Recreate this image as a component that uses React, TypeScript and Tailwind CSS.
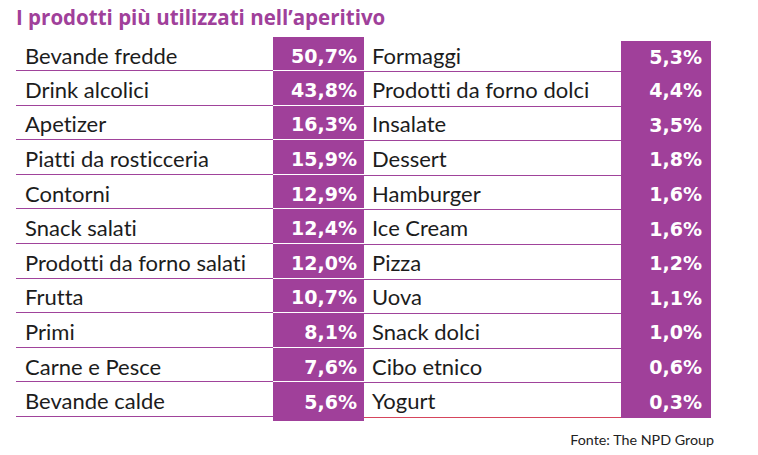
import React from "react";

const left: [string, string][] = [
  ["Bevande fredde", "50,7%"],
  ["Drink alcolici", "43,8%"],
  ["Apetizer", "16,3%"],
  ["Piatti da rosticceria", "15,9%"],
  ["Contorni", "12,9%"],
  ["Snack salati", "12,4%"],
  ["Prodotti da forno salati", "12,0%"],
  ["Frutta", "10,7%"],
  ["Primi", "8,1%"],
  ["Carne e Pesce", "7,6%"],
  ["Bevande calde", "5,6%"],
];

const right: [string, string][] = [
  ["Formaggi", "5,3%"],
  ["Prodotti da forno dolci", "4,4%"],
  ["Insalate", "3,5%"],
  ["Dessert", "1,8%"],
  ["Hamburger", "1,6%"],
  ["Ice Cream", "1,6%"],
  ["Pizza", "1,2%"],
  ["Uova", "1,1%"],
  ["Snack dolci", "1,0%"],
  ["Cibo etnico", "0,6%"],
  ["Yogurt", "0,3%"],
];

const font = { fontFamily: "Lato, 'Noto Sans', sans-serif" };
const pctFont = { fontFamily: "'DejaVu Sans', sans-serif" };
const titleFont = { fontFamily: "'Open Sans', sans-serif" };

export default function App() {
  return (
    <div
      className="w-[758px] h-[455px] bg-white text-[#1c1c1c] [font-variant-ligatures:none]"
      style={font}
    >
      <div
        className="pt-[5px] pl-[16px] text-[20.5px] leading-[24px] font-bold text-[#a0409a]"
        style={titleFont}
      >
        I prodotti più utilizzati nell’aperitivo
      </div>
      <div className="flex items-start pl-[16px] mt-[8px]">
        {/* left table */}
        <div className="w-[348px] flex flex-col">
          {left.map(([l, v], i) => (
            <div
              key={l}
              className={`flex ${i === 0 ? "h-[34px]" : "h-[34.6px]"}`}
            >
              <div className="flex-1 flex items-center pl-[9px] pt-[4px] border-b border-[#a0439b] text-[22px] leading-none whitespace-nowrap">
                {l}
              </div>
              <div
                className={`w-[91px] flex items-center justify-end pr-[7px] pt-[5px] bg-[#a0409a] text-white font-bold text-[19px] leading-none ${
                  i === left.length - 1 ? "" : "border-b border-white"
                }`}
                style={pctFont}
              >
                {v}
              </div>
            </div>
          ))}
          <div className="flex h-[4px]">
            <div className="flex-1" />
            <div className="w-[91px] bg-[#a0409a]" />
          </div>
        </div>
        {/* right table */}
        <div className="w-[347px] flex flex-col mt-[4px]">
          {right.map(([l, v], i) => (
            <div
              key={l}
              className={`flex ${i === 0 ? "h-[31px]" : "h-[34.6px]"}`}
            >
              <div
                className={`flex-1 flex items-center pl-[8px] border-b text-[22px] leading-none whitespace-nowrap ${
                  i === 0 ? "pt-0" : "pt-[2px]"
                } ${i === right.length - 1 ? "border-[#d6455c]" : "border-[#a0439b]"}`}
              >
                {l}
              </div>
              <div
                className={`w-[90px] flex items-center justify-end pr-[9px] bg-[#a0409a] text-white font-bold text-[19px] leading-none ${
                  i === 0 ? "pt-[1px]" : "pt-[3px]"
                }`}
                style={pctFont}
              >
                {v}
              </div>
            </div>
          ))}
        </div>
      </div>
      <div className="flex justify-end pr-[44px] mt-[11px] text-[14.3px] leading-[16px] text-[#222]">
        Fonte: The NPD Group
      </div>
    </div>
  );
}
